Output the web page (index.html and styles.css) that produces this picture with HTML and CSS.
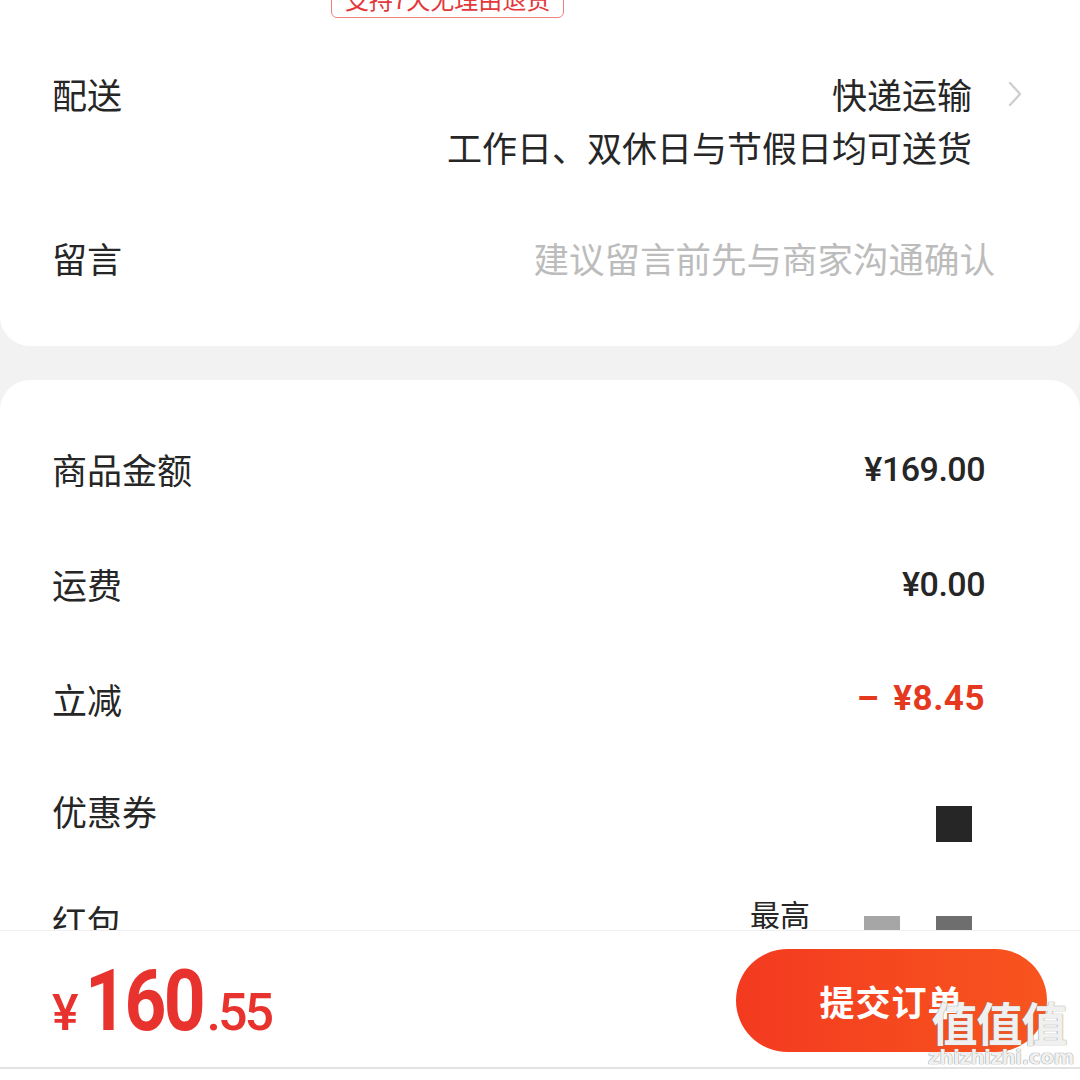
FILE: index.html
```html
<!DOCTYPE html>
<html lang="zh-CN">
<head>
<meta charset="utf-8">
<title>确认订单</title>
<link rel="stylesheet" href="styles.css">
</head>
<body>
<div class="page">
  <section class="card card-top">
    <div class="goods-tags"><span class="tag">支持7天无理由退货</span></div>
    <div class="row row-delivery">
      <div class="label">配送</div>
      <div class="delivery-info">
        <div class="delivery-line">
          <span>快递运输</span>
          <svg class="chevron" width="14" height="26" viewBox="0 0 14 26"><polyline points="2,2 12,13 2,24" fill="none" stroke="#cfcfcf" stroke-width="2.4" stroke-linecap="round" stroke-linejoin="round"/></svg>
        </div>
        <div class="delivery-sub">工作日、双休日与节假日均可送货</div>
      </div>
    </div>
    <div class="row row-note">
      <div class="label">留言</div>
      <div class="placeholder">建议留言前先与商家沟通确认</div>
    </div>
  </section>

  <section class="card card-sum">
    <div class="sum-row">
      <div class="label">商品金额</div>
      <div class="amount">¥169.00</div>
    </div>
    <div class="sum-row">
      <div class="label">运费</div>
      <div class="amount">¥0.00</div>
    </div>
    <div class="sum-row">
      <div class="label">立减</div>
      <div class="amount amount-red"><span class="minus">–</span>¥8.45</div>
    </div>
    <div class="sum-row sum-row-coupon">
      <div class="label">优惠券</div>
      <div class="blocks"><span class="sq sq-dark"></span></div>
    </div>
    <div class="sum-row sum-row-packet">
      <div class="label">红包</div>
      <div class="blocks"><span class="packet-text">最高</span><span class="sq sq-light"></span><span class="sq sq-mid"></span></div>
    </div>
  </section>
</div>

<footer class="bar">
  <div class="bar-inner">
    <div class="total">
      <span class="cur">¥</span><span class="int">160</span><span class="dec">.55</span>
    </div>
    <button class="submit">提交订单</button>
  </div>
  <div class="watermark">
    <div class="wm-logo">值值值</div>
    <div class="wm-url">zhizhizhi.com</div>
  </div>
</footer>
</body>
</html>
```

FILE: styles.css
```css
* { box-sizing: border-box; }
html, body { margin: 0; padding: 0; }
body {
  width: 1080px;
  height: 1080px;
  overflow: hidden;
  background: #f2f2f2;
  font-family: "Noto Sans CJK SC", "Noto Sans", sans-serif;
  color: #262626;
}
.page { display: flex; flex-direction: column; }
.card { background: #fff; }
.card-top {
  border-radius: 0 0 30px 30px;
  padding: 0 58px 0 52px;
  height: 346px;
}
.goods-tags { margin-top: -20px; padding-left: 279px; display: flex; }
.tag {
  display: inline-block;
  font-size: 24px;
  line-height: 36px;
  color: #e3383a;
  border: 1px solid #e9847c;
  border-radius: 6px;
  padding: 0 13px;
}
.row { display: flex; justify-content: space-between; }
.label { font-size: 35px; line-height: 53px; color: #262626; }
.row-delivery { margin-top: 49px; }
.delivery-info { display: flex; flex-direction: column; align-items: flex-end; font-size: 35px; line-height: 53px; color: #262626; }
.delivery-line { display: flex; align-items: center; }
.chevron { margin-left: 36px; margin-top: 0; }
.delivery-sub { margin-right: 50px; }
.row-note { margin-top: 58px; }
.placeholder { font-size: 35.5px; line-height: 53px; color: #bcbcbc; margin-right: 27px; }

.card-sum {
  margin-top: 34px;
  border-radius: 30px 30px 0 0;
  padding: 31px 95px 0 52px;
  height: 720px;
}
.sum-row { display: flex; justify-content: space-between; align-items: center; height: 115px; }
.sum-row-coupon { height: 109px; }
.sum-row-packet { height: 110px; }
.amount {
  font-family: "Roboto", "Liberation Sans", sans-serif;
  font-weight: 500;
  font-size: 34px;
  letter-spacing: -0.5px;
  color: #262626;
}
.amount-red { color: #e5391f; font-weight: 700; font-size: 35px; letter-spacing: 0.5px; }
.minus { margin-right: 14px; }
.blocks { display: flex; align-items: flex-start; margin-right: 13px; }
.sq { display: block; width: 36px; height: 36px; margin-top: 27px; }
.sq-dark { background: #262626; }
.sq-light { background: #a6a6a6; margin-left: 54px; }
.sq-mid { background: #6e6e6e; margin-left: 36px; }
.packet-text { font-size: 30px; line-height: 36px; color: #262626; margin-top: 6px; }

.bar {
  position: fixed;
  left: 0; right: 0; bottom: 0;
  height: 150px;
  background: #fff;
  border-top: 1px solid #f0f0f0;
}
.bar-inner {
  height: 138px;
  border-bottom: 2px solid #e2e2e2;
  display: flex;
  align-items: center;
  justify-content: space-between;
  padding: 0 33px 0 52px;
}
.total {
  display: flex;
  align-items: baseline;
  color: #e8322d;
  font-family: "Roboto", "Liberation Sans", sans-serif;
  font-weight: 700;
  margin-top: 2px;
}
.cur { font-size: 50px; font-weight: 500; margin-right: 6px; }
.int {
  display: inline-block;
  font-size: 86px;
  letter-spacing: -3px;
  transform: scaleX(0.85);
  transform-origin: left bottom;
  margin-right: -17px;
}
.dec { font-size: 52px; letter-spacing: -3px; font-weight: 500; }
.submit {
  width: 311px;
  height: 103px;
  border: none;
  border-radius: 52px;
  background: linear-gradient(90deg, #f33a20 0%, #f8551e 100%);
  color: #fff;
  font-family: "Noto Sans CJK SC", sans-serif;
  font-weight: 700;
  font-size: 35px;
  letter-spacing: 1px;
  margin-top: 2px;
}
.watermark {
  position: absolute;
  right: 10px;
  top: 64px;
  width: 142px;
  text-align: center;
  color: rgba(255,255,255,0.9);
  text-shadow: 0 0 1px #8a8a8a, 0 0 1px #8a8a8a;
}
.wm-logo { font-size: 46px; line-height: 52px; font-weight: 700; letter-spacing: -1px; }
.wm-url { font-family: "DejaVu Sans", sans-serif; font-size: 20px; line-height: 20px; font-weight: 700; letter-spacing: -0.5px; }
```
